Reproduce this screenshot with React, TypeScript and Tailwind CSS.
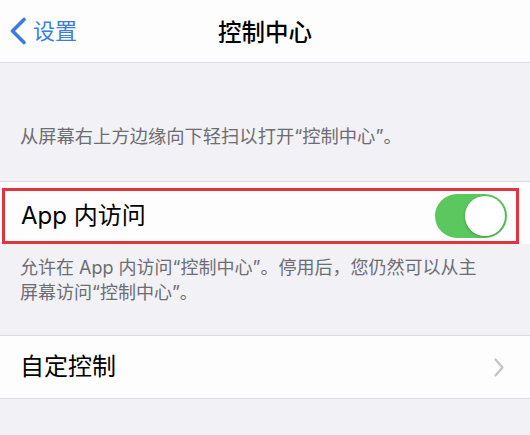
const font = "font-['Inter','Noto_Sans_CJK_SC',sans-serif]";

function BackChevron() {
  return (
    <svg width="18" height="28" viewBox="0 0 18 28" fill="none" className="shrink-0">
      <path d="M15 2.5 L3.5 14 L15 25.5" stroke="currentColor" strokeWidth="3.6" strokeLinecap="round" strokeLinejoin="round" />
    </svg>
  );
}

function Disclosure() {
  return (
    <svg width="10" height="19" viewBox="0 0 10 19" fill="none" className="shrink-0 text-[#c4c4c8]">
      <path d="M1.5 1.5 L8.5 9.5 L1.5 17.5" stroke="currentColor" strokeWidth="2.2" strokeLinecap="round" strokeLinejoin="round" />
    </svg>
  );
}

function Toggle({ on = true }: { on?: boolean }) {
  return (
    <div
      className={`flex h-[44px] w-[72px] shrink-0 items-center rounded-full p-[2px] ${
        on ? "justify-end bg-[#5bc75f]" : "justify-start bg-[#e9e9eb]"
      }`}
    >
      <div className="h-[40px] w-[40px] rounded-full bg-white shadow-[0_1px_3px_rgba(0,0,0,0.25)]" />
    </div>
  );
}

export default function App() {
  return (
    <div className={`h-[435px] w-[530px] overflow-hidden bg-[#f2f1f6] ${font}`}>
      <header className="grid h-[63px] grid-cols-[1fr_auto_1fr] items-center border-b border-[#dcdce0] bg-[#fdfdfd]">
        <div className="flex items-center gap-[6px] pl-[9px] text-[#3c7ddb]">
          <BackChevron />
          <span className="text-[22px] leading-none">设置</span>
        </div>
        <h1 className="pt-[3px] text-[23.5px] font-medium leading-none text-black">控制中心</h1>
        <div />
      </header>

      <p className="px-[20px] pb-[34px] pt-[62px] text-[18.3px] leading-[22px] text-[#6d6d72]">
        从屏幕右上方边缘向下轻扫以打开“控制中心”。
      </p>

      <section className="h-[63px] border-t border-[#dcdce0] bg-[#fdfdfd] pl-[2px] pr-[11px] pt-[6px]">
        <div className="flex h-[56px] items-center justify-between border-[3px] border-[#e2343f] pl-[16px] pr-[9px]">
          <span className="text-[24px] leading-none text-black">App 内访问</span>
          <Toggle />
        </div>
      </section>

      <p className="px-[20px] pb-[30px] pt-[11px] text-[18px] leading-[25px] text-[#6d6d72]">
        允许在 App 内访问“控制中心”。停用后，您仍然可以从主
        <br />
        屏幕访问“控制中心”。
      </p>

      <section className="flex h-[64px] items-center justify-between border-y border-[#dcdce0] bg-[#fdfdfd] pl-[20px] pr-[26px]">
        <span className="text-[24px] leading-none text-black">自定控制</span>
        <Disclosure />
      </section>
    </div>
  );
}
